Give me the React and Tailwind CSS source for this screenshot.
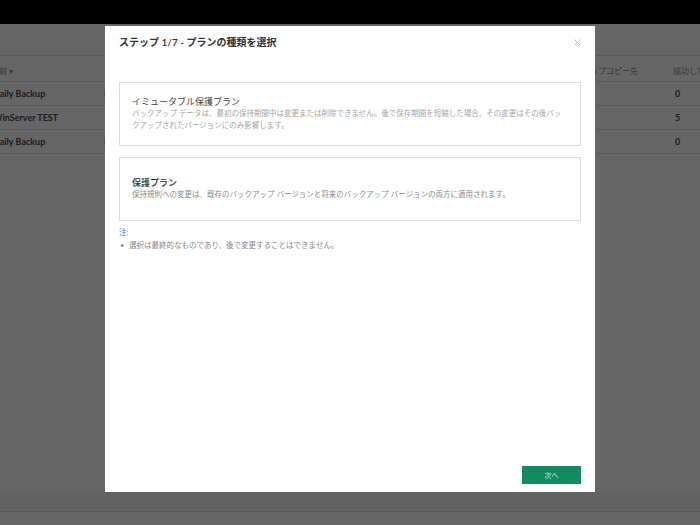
export default function App() {
  const rows = [
    { name: "Daily Backup", col2: "Daily", val: "0" },
    { name: "WinServer TEST", col2: "", val: "5" },
    { name: "Daily Backup", col2: "Daily", val: "0" },
  ];
  return (
    <div className="relative w-[700px] h-[525px] overflow-hidden bg-white font-[Lato,'Noto_Sans_CJK_JP',sans-serif]">
      {/* background page */}
      <div className="flex flex-col h-full">
        <div className="h-[24px] bg-black shrink-0" />
        <div className="h-[32px] shrink-0 border-b border-[#e4e4e4]" />
        <div className="h-[26px] shrink-0 flex items-end pb-[4px] border-b border-[#e4e4e4] text-[8px] leading-[12px] text-[#888]">
          <div className="w-[111px] shrink-0 -ml-[9px] whitespace-nowrap">名前 ▾</div>
          <div className="w-[456px] shrink-0" />
          <div className="w-[115px] shrink-0 whitespace-nowrap">バックアップコピー先</div>
          <div className="flex-1 whitespace-nowrap">成功したバックアップ</div>
        </div>
        {rows.map((r, i) => (
          <div key={i} className="h-[24px] shrink-0 flex items-center border-b border-[#e4e4e4] text-[9px] leading-[12px] font-bold text-[#4a4a4a]">
            <div className="w-[111px] shrink-0 -ml-[7px] whitespace-nowrap">{r.name}</div>
            <div className="w-[456px] shrink-0 whitespace-nowrap">{r.col2}</div>
            <div className="w-[115px] shrink-0" />
            <div className="flex-1">{r.val}</div>
          </div>
        ))}
        <div className="flex-1" />
        <div className="h-[20px] shrink-0 bg-[#f6f6f6] border-b border-[#e0e0e0]" />
        <div className="h-[13px] shrink-0" />
      </div>

      {/* overlay */}
      <div className="absolute inset-0 bg-black/60">
        <div className="absolute left-[105px] top-[26px] w-[490px] h-[466px] bg-white flex flex-col">
          <div className="h-[32px] shrink-0 flex items-center justify-between pl-[14px] pr-[14px]">
            <div className="text-[10px] leading-[14px] font-semibold text-[#333] whitespace-nowrap">
              ステップ 1/7 - プランの種類を選択
            </div>
            <svg width="7" height="7" viewBox="0 0 7 7" className="mt-[1px]">
              <path d="M0.5 0.5 L6.5 6.5 M6.5 0.5 L0.5 6.5" stroke="#b5b5b5" strokeWidth="0.9" />
            </svg>
          </div>

          <div className="flex flex-col px-[14px] pt-[24px] flex-1">
            <div className="h-[64px] border border-[#dcdcdc] flex flex-col justify-center px-[12px]">
              <div className="text-[9px] leading-[12px] text-[#444] whitespace-nowrap">イミュータブル保護プラン</div>
              <div className="text-[7.5px] leading-[12px] text-[#a5a5a5] whitespace-nowrap">
                バックアップ データは、最初の保持期間中は変更または削除できません。後で保存期間を短縮した場合、その変更はその後バッ
              </div>
              <div className="text-[7.5px] leading-[12px] text-[#a5a5a5] whitespace-nowrap">
                クアップされたバージョンにのみ影響します。
              </div>
            </div>

            <div className="h-[64px] mt-[11px] border border-[#dcdcdc] flex flex-col justify-center px-[12px]">
              <div className="text-[9px] leading-[12px] font-medium text-[#333] whitespace-nowrap">保護プラン</div>
              <div className="text-[7.5px] leading-[12px] text-[#8a8a8a] whitespace-nowrap">
                保持規則への変更は、既存のバックアップ バージョンと将来のバックアップ バージョンの両方に適用されます。
              </div>
            </div>

            <div className="mt-[6px] text-[7.5px] leading-[12px] text-[#3b78c8]">注:</div>
            <div className="mt-[1px] flex items-center text-[7.5px] leading-[12px] text-[#888] whitespace-nowrap">
              <span className="w-[10px] pl-[1px] text-[#888]">•</span>
              <span>選択は最終的なものであり、後で変更することはできません。</span>
            </div>

            <div className="flex-1" />
            <div className="flex justify-end pb-[8px]">
              <div className="w-[59px] h-[18px] bg-[#138a5f] flex items-center justify-center text-[7px] text-[#d4ebe1]">
                次へ
              </div>
            </div>
          </div>
        </div>
      </div>
    </div>
  );
}
